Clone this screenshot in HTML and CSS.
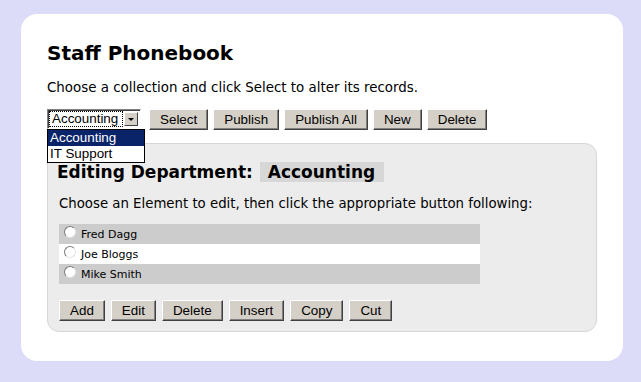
FILE: index.html
```html
<!DOCTYPE html>
<html lang="en">

<head>
    <meta charset="UTF-8">
    <title>Staff Phonebook</title>
    <link rel="stylesheet" href="styles.css">
</head>

<body>
    <div class="card">
        <h1>Staff Phonebook</h1>
        <p class="intro">Choose a collection and click Select to alter its records.</p>

        <div class="toolbar">
            <div class="picker">
                <div class="picker-box">
                    <span class="picker-value">Accounting</span>
                    <span class="picker-arrow"></span>
                </div>
                <ul class="picker-list">
                    <li class="active">Accounting</li>
                    <li>IT Support</li>
                </ul>
            </div>
            <button class="btn">Select</button>
            <button class="btn">Publish</button>
            <button class="btn">Publish All</button>
            <button class="btn">New</button>
            <button class="btn">Delete</button>
        </div>

        <div class="panel">
            <h2>Editing Department: <span class="dept">Accounting</span></h2>
            <p class="hint">Choose an Element to edit, then click the appropriate button following:</p>

            <div class="rows">
                <label class="row odd"><span class="radio"></span>Fred Dagg</label>
                <label class="row"><span class="radio"></span>Joe Bloggs</label>
                <label class="row odd"><span class="radio"></span>Mike Smith</label>
            </div>

            <div class="actions">
                <button class="btn">Add</button>
                <button class="btn">Edit</button>
                <button class="btn">Delete</button>
                <button class="btn">Insert</button>
                <button class="btn">Copy</button>
                <button class="btn">Cut</button>
            </div>
        </div>
    </div>
</body>

</html>
```

FILE: styles.css
```css
body {
    margin: 0;
    padding: 14px 18px 21px 21px;
    background-color: #dcdcf9;
    font-family: "DejaVu Sans", Verdana, sans-serif;
    color: #000;
}

.card {
    background-color: #fff;
    border-radius: 16px;
    height: 347px;
    box-sizing: border-box;
    padding: 27px 26px 0 26px;
}

h1 {
    margin: 0;
    font-size: 20px;
    line-height: 24px;
    font-weight: bold;
}

.intro {
    margin: 15px 0 13px 0;
    font-size: 13.4px;
    line-height: 16px;
}

.toolbar {
    position: relative;
    display: flex;
    align-items: flex-start;
    height: 21px;
}

.btn {
    font-family: "Liberation Sans", Arial, sans-serif;
    font-size: 13.4px;
    height: 21px;
    line-height: 16px;
    padding: 0 10px;
    margin: 0 5px 0 0;
    background-color: #d4d0c8;
    color: #000;
    border: 1px solid;
    border-color: #fff #404040 #404040 #fff;
    box-shadow: inset -1px -1px 0 #808080;
    border-radius: 0;
}

.picker {
    position: relative;
    margin-right: 8px;
}

.picker-box {
    width: 94px;
    height: 20px;
    box-sizing: border-box;
    border: 1px solid;
    border-color: #808080 #fff #fff #808080;
    box-shadow: inset 1px 1px 0 #404040;
    background-color: #fff;
    display: flex;
    align-items: center;
    padding: 2px;
}

.picker-value {
    flex: 1;
    font-family: "Liberation Sans", Arial, sans-serif;
    font-size: 13.4px;
    line-height: 14px;
    outline: 1px dotted #000;
    padding-left: 2px;
    margin-right: 2px;
}

.picker-arrow {
    width: 14px;
    height: 14px;
    box-sizing: border-box;
    background-color: #d4d0c8;
    border: 1px solid;
    border-color: #fff #404040 #404040 #fff;
    position: relative;
}

.picker-arrow::after {
    content: "";
    position: absolute;
    left: 3px;
    top: 5px;
    border-left: 3px solid transparent;
    border-right: 3px solid transparent;
    border-top: 3px solid #000;
}

.picker-list {
    position: absolute;
    top: 20px;
    left: 0;
    width: 98px;
    margin: 0;
    padding: 0;
    list-style: none;
    background-color: #fff;
    border: 1px solid #000;
    box-sizing: border-box;
    z-index: 2;
    font-family: "Liberation Sans", Arial, sans-serif;
    font-size: 13.4px;
}

.picker-list li {
    height: 16px;
    line-height: 16px;
    padding-left: 2px;
}

.picker-list li.active {
    background-color: #0a246a;
    color: #fff;
}

.panel {
    margin-top: 13px;
    height: 189px;
    box-sizing: border-box;
    background-color: #ececec;
    border: 1px solid #d6d6d6;
    border-radius: 12px;
    padding: 18px 12px 0 11px;
}

h2 {
    margin: 0 0 0 -2px;
    font-size: 17px;
    line-height: 20px;
    font-weight: bold;
}

.dept {
    display: inline-block;
    background-color: #d7d7d7;
    padding: 0 9px 0 8px;
    margin-left: 1px;
}

.hint {
    margin: 14px 0 13px 0;
    font-size: 13.3px;
    line-height: 15px;
}

.rows {
    width: 421px;
}

.row {
    display: flex;
    align-items: center;
    height: 20px;
    background-color: #fff;
    font-size: 11px;
    padding-left: 5px;
}

.row.odd {
    background-color: #cccccc;
}

.radio {
    width: 12px;
    height: 12px;
    box-sizing: border-box;
    border-radius: 50%;
    border: 1px solid;
    border-color: #7a7a7a #e4e4e4 #e4e4e4 #7a7a7a;
    background-color: #fff;
    margin: -5px 5px 0 0;
}

.actions {
    display: flex;
    margin-top: 16px;
}

.actions .btn {
    margin-right: 6px;
}
```
